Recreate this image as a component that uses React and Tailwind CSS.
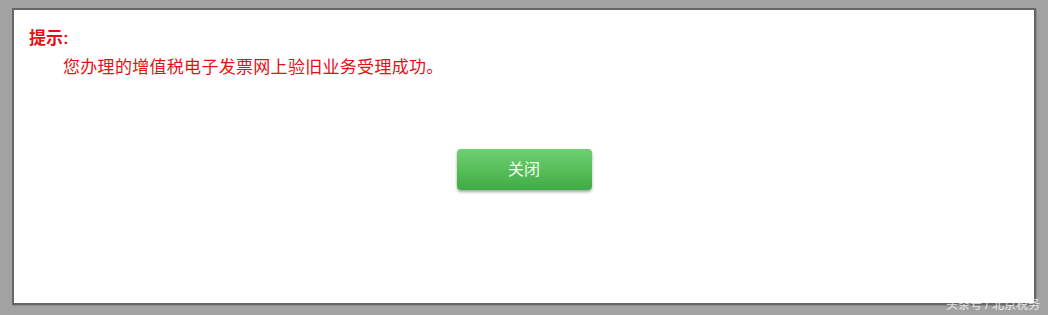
export default function App() {
  return (
    <div
      className="relative w-[1048px] h-[315px] bg-[#a2a2a2] pt-[8px] pl-[12px]"
      style={{ fontFamily: '"Liberation Sans", "Noto Sans CJK SC", sans-serif' }}
    >
      <div className="w-[1024px] h-[297px] bg-white border-2 border-[#666666] shadow-[1px_1px_0_#8a8a8a]">
        <div className="pt-[19px] pl-[15px] text-[#e60f17]">
          <div className="text-[17px] leading-[20px] font-bold">提示:</div>
          <div className="mt-[9px] pl-[34px] text-[17px] leading-[20px] tracking-[0.3px]">
            您办理的增值税电子发票网上验旧业务受理成功。
          </div>
        </div>
        <div className="flex justify-center mt-[71px]">
          <button className="w-[135px] h-[41px] rounded-[4px] bg-gradient-to-b from-[#6fd06f] to-[#3fab45] text-[#f2fff0] text-[16px] shadow-[0_2px_3px_rgba(0,0,0,0.35)]">
            关闭
          </button>
        </div>
      </div>
      <div className="absolute right-[8px] bottom-[2px] text-[12px] leading-[16px] text-white/80">
        头条号 / 北京税务
      </div>
    </div>
  );
}
